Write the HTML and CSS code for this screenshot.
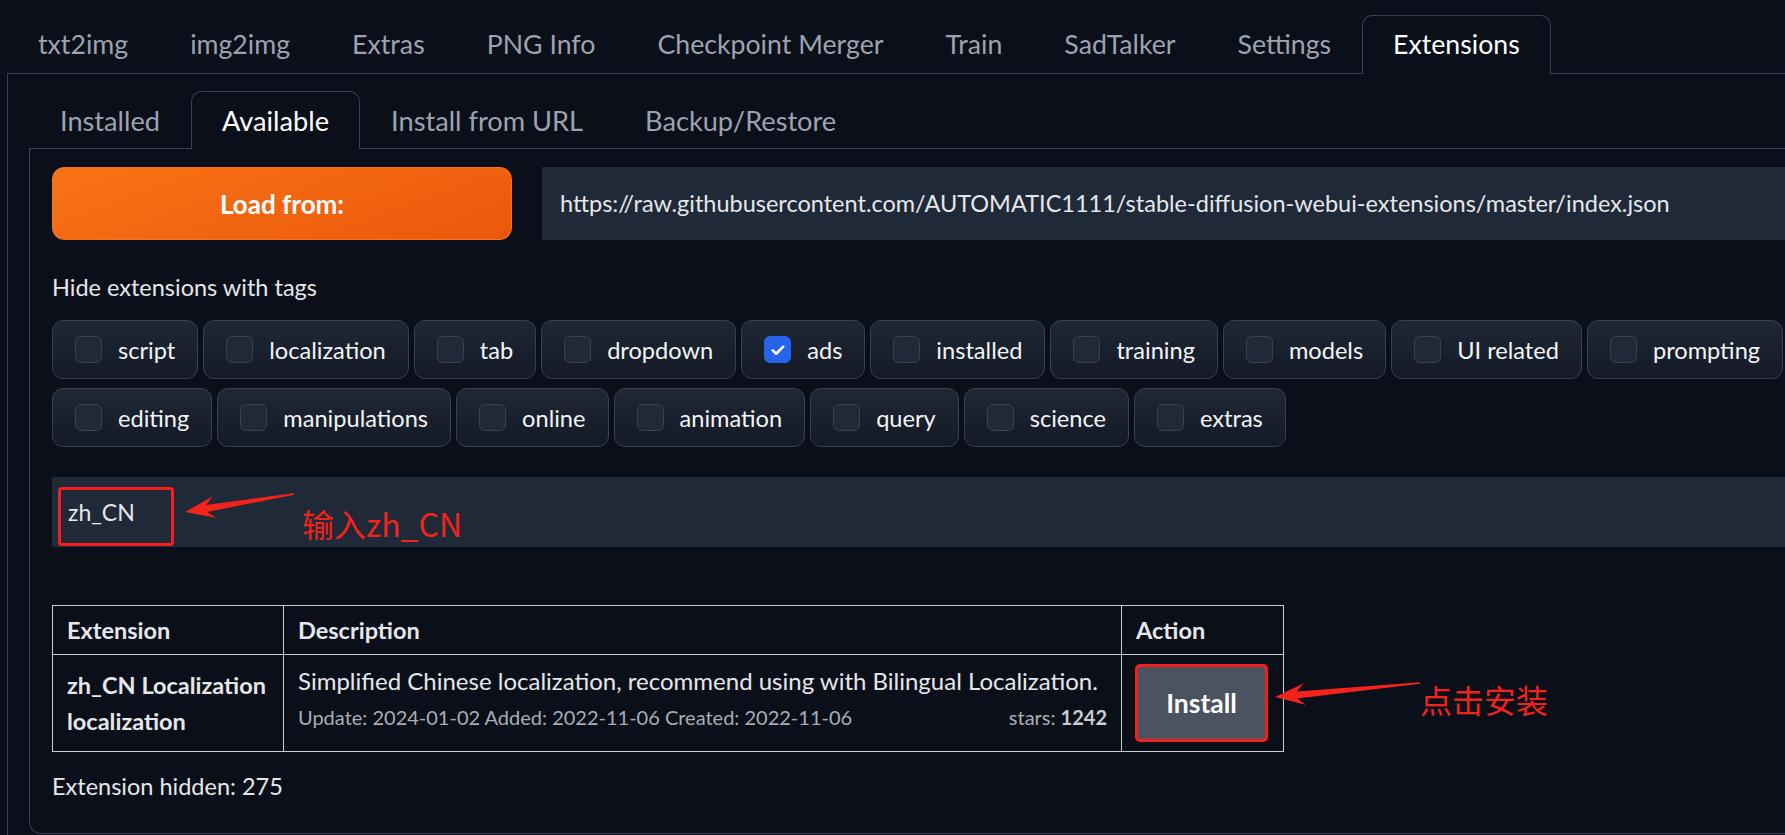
FILE: index.html
```html
<!DOCTYPE html>
<html lang="en">
<head>
    <meta charset="UTF-8">
    <title>Stable Diffusion - Extensions</title>
    <link rel="stylesheet" href="styles.css">
</head>
<body>

    <!-- Top tabs -->
    <div class="tabs">
        <div class="tab">txt2img</div>
        <div class="tab">img2img</div>
        <div class="tab">Extras</div>
        <div class="tab">PNG Info</div>
        <div class="tab">Checkpoint Merger</div>
        <div class="tab">Train</div>
        <div class="tab">SadTalker</div>
        <div class="tab">Settings</div>
        <div class="tab active">Extensions</div>
    </div>

    <div class="panel">
        <!-- Extension sub tabs -->
        <div class="tabs sub">
            <div class="tab">Installed</div>
            <div class="tab active">Available</div>
            <div class="tab">Install from URL</div>
            <div class="tab">Backup/Restore</div>
        </div>

        <div class="inner">
            <div class="load-row">
                <button class="load-btn">Load from:</button>
                <div class="url-input">https://raw.githubusercontent.com/AUTOMATIC1111/stable-diffusion-webui-extensions/master/index.json</div>
            </div>

            <div class="label">Hide extensions with tags</div>

            <div class="tag-row">
                <label class="tag"><span class="box"></span>script</label>
                <label class="tag"><span class="box"></span>localization</label>
                <label class="tag"><span class="box"></span>tab</label>
                <label class="tag"><span class="box"></span>dropdown</label>
                <label class="tag"><span class="box checked"><svg viewBox="0 0 24 24" width="18" height="18"><path d="M5 12.5l4.5 4.5L19 7.5" fill="none" stroke="#fff" stroke-width="3.4" stroke-linecap="round" stroke-linejoin="round"/></svg></span>ads</label>
                <label class="tag"><span class="box"></span>installed</label>
                <label class="tag"><span class="box"></span>training</label>
                <label class="tag"><span class="box"></span>models</label>
                <label class="tag"><span class="box"></span>UI related</label>
                <label class="tag"><span class="box"></span>prompting</label>
            </div>
            <div class="tag-row">
                <label class="tag"><span class="box"></span>editing</label>
                <label class="tag"><span class="box"></span>manipulations</label>
                <label class="tag"><span class="box"></span>online</label>
                <label class="tag"><span class="box"></span>animation</label>
                <label class="tag"><span class="box"></span>query</label>
                <label class="tag"><span class="box"></span>science</label>
                <label class="tag"><span class="box"></span>extras</label>
            </div>

            <!-- Search box with annotation -->
            <div class="search">
                <span class="search-text">zh_CN</span>
                <div class="mark search-mark"></div>
                <svg class="arrow arrow-search" width="120" height="35" viewBox="0 0 120 35">
                    <polygon points="5,27 36.4,32.9 27.3,26.9 114.1,9.8 113.9,8.2 26.1,20 32.8,11.3" fill="#f2231b"/>
                </svg>
                <span class="note note-search">输入zh_CN</span>
            </div>

            <div class="table-wrap">
                <table class="ext-table">
                    <colgroup>
                        <col style="width: 231px">
                        <col style="width: 838px">
                        <col style="width: 162px">
                    </colgroup>
                    <tr>
                        <th>Extension</th>
                        <th>Description</th>
                        <th>Action</th>
                    </tr>
                    <tr>
                        <td class="name">zh_CN Localization<br>localization</td>
                        <td class="desc">
                            Simplified Chinese localization, recommend using with Bilingual Localization.
                            <div class="meta">
                                <span>Update: 2024-01-02 Added: 2022-11-06 Created: 2022-11-06</span>
                                <span>stars: <b>1242</b></span>
                            </div>
                        </td>
                        <td class="action"><button class="install-btn">Install</button></td>
                    </tr>
                </table>
                <svg class="arrow arrow-install" width="155" height="35" viewBox="0 0 155 35">
                    <polygon points="5,22 36,30 27.2,23.4 150.1,8.8 149.9,7.2 26.6,16.4 33.8,8.2" fill="#f2231b"/>
                </svg>
                <span class="note note-install">点击安装</span>
            </div>

            <div class="hidden-count">Extension hidden: 275</div>
        </div>
    </div>

</body>
</html>
```

FILE: styles.css
```css
body {
    margin: 0;
    padding: 15px 0 0 7px;
    height: 835px;
    box-sizing: border-box;
    overflow: hidden;
    background-color: #0b0f19;
    color: #e5e7eb;
    font-family: "Source Sans Pro", Lato, "Noto Sans", sans-serif;
}

/* Tabs */
.tabs {
    display: flex;
    position: relative;
    z-index: 1;
    margin-bottom: -1px;
}

.tab {
    padding: 0 30px;
    height: 58px;
    line-height: 56px;
    font-size: 26.7px;
    color: #9ca3af;
    border: 1px solid transparent;
    border-bottom: none;
    white-space: nowrap;
}

.tab.active {
    color: #fff;
    background-color: #0b0f19;
    border-color: #374151;
    border-radius: 10px 10px 0 0;
}

.tabs.sub .tab {
    height: 57px;
    line-height: 57px;
    font-size: 27.2px;
}

.panel {
    width: 1850px;
    border: 1px solid #374151;
    border-right: none;
    border-radius: 0 0 0 12px;
    padding: 17px 0 40px 21px;
}

.inner {
    border: 1px solid #374151;
    border-right: none;
    border-radius: 0 0 0 12px;
    padding: 18px 0 32px 22px;
}

/* Load row */
.load-row {
    display: flex;
    gap: 30px;
    width: 1760px;
}

.load-btn {
    width: 460px;
    height: 73px;
    border: 1px solid #f97316;
    border-radius: 12px;
    background: linear-gradient(160deg, #f97316, #ea580c);
    color: #fff;
    font-family: inherit;
    font-size: 26px;
    font-weight: bold;
}

.url-input {
    flex: 1;
    height: 73px;
    line-height: 73px;
    padding-left: 18px;
    background-color: #1f2937;
    font-size: 23.5px;
    white-space: nowrap;
}

.label {
    margin-top: 32px;
    line-height: 30px;
    font-size: 23.5px;
}

/* Tag checkboxes */
.tag-row {
    display: flex;
    gap: 5px;
    margin-top: 18px;
    white-space: nowrap;
}

.tag-row + .tag-row {
    margin-top: 9px;
}

.tag {
    display: flex;
    align-items: center;
    gap: 16px;
    height: 59px;
    box-sizing: border-box;
    padding: 0 22px;
    border: 1px solid #374151;
    border-radius: 11px;
    background: linear-gradient(#1f2735, #141a26);
    font-size: 23.6px;
    color: #f3f4f6;
}

.box {
    width: 27px;
    height: 27px;
    box-sizing: border-box;
    border: 1px solid #374151;
    border-radius: 6px;
    background-color: #1f2937;
    display: flex;
    align-items: center;
    justify-content: center;
}

.box.checked {
    background-color: #2563eb;
    border-color: #2563eb;
}

/* Search */
.search {
    position: relative;
    margin-top: 30px;
    width: 1760px;
    height: 70px;
    background-color: #1f2937;
}

.search-text {
    position: absolute;
    left: 16px;
    top: 20px;
    font-size: 23px;
    line-height: 30px;
}

.mark {
    position: absolute;
    border: 3px solid #f51d1d;
    border-radius: 4px;
    box-sizing: border-box;
}

.search-mark {
    left: 6px;
    top: 10px;
    width: 116px;
    height: 59px;
}

.arrow {
    position: absolute;
}

.arrow-search {
    left: 128px;
    top: 8px;
}

.note {
    position: absolute;
    color: #f2231b;
    font-family: "Noto Sans CJK SC", sans-serif;
    font-size: 32px;
    line-height: 40px;
    white-space: nowrap;
}

.note-search {
    left: 250px;
    top: 26px;
}

/* Table */
.table-wrap {
    position: relative;
    margin-top: 58px;
}

.ext-table {
    border-collapse: collapse;
    table-layout: fixed;
    width: 1231px;
}

.ext-table th,
.ext-table td {
    border: 1px solid #c9ccd1;
    text-align: left;
    font-size: 23.5px;
}

.ext-table th {
    height: 48px;
    padding: 0 14px;
    font-weight: bold;
}

.ext-table td {
    height: 88px;
    padding: 0 14px;
}

.ext-table td.name {
    font-weight: bold;
    line-height: 36px;
}

.ext-table td.desc {
    font-size: 24px;
    line-height: 36px;
    padding-bottom: 8px;
}

.meta {
    display: flex;
    justify-content: space-between;
    font-size: 20px;
    color: #a9adb5;
}

.meta b {
    color: #c9ccd1;
}

.ext-table td.action {
    padding: 0 13px;
}

.install-btn {
    display: block;
    width: 133px;
    height: 78px;
    border: 3px solid #f51d1d;
    border-radius: 5px;
    background-color: #4b5361;
    color: #fff;
    font-family: inherit;
    font-size: 26.5px;
    font-weight: bold;
}

.arrow-install {
    left: 1218px;
    top: 70px;
}

.note-install {
    left: 1368px;
    top: 74px;
}

.hidden-count {
    margin-top: 19px;
    line-height: 30px;
    font-size: 23.5px;
}
```
